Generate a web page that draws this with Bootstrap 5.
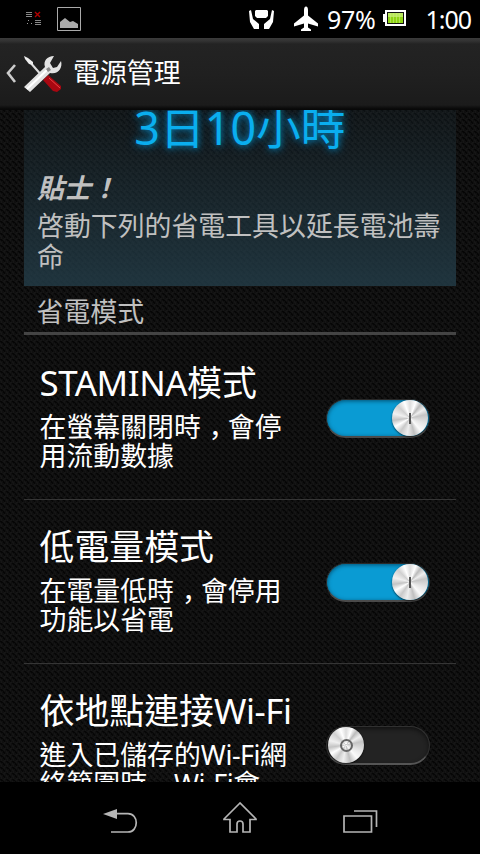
<!DOCTYPE html>
<html lang="zh-Hant">
<head>
<meta charset="utf-8">
<meta name="viewport" content="width=device-width, initial-scale=1">
<title>電源管理</title>
<link href="https://cdn.jsdelivr.net/npm/bootstrap@5.3.0/dist/css/bootstrap.min.css" rel="stylesheet">
<style>
body{width:480px;height:854px;background:#000;color:#fff;font-family:"Noto Sans","Noto Sans CJK TC",sans-serif;font-size:26.9px}
.status-bar{height:38px;flex:none}
.status-text{font-size:25px;line-height:39px;letter-spacing:-.3px}
.clock{letter-spacing:-1px;margin-right:9px}
.app-bar{height:72px;flex:none;background:linear-gradient(#3b3b3b 0,#323232 3px,#232323 6px,#202020 50%,#1b1b1b 67px,#080808 71px)}
.app-title{line-height:69px;margin-left:10px}
.screen{height:672px;flex:none;padding:0 24px;background-color:#0f0f0f;
background-image:url("data:image/svg+xml,%3Csvg xmlns='http://www.w3.org/2000/svg' width='6' height='6' shape-rendering='crispEdges'%3E%3Cpath fill='%23151515' d='M0 0h2v1H0zM1 1h1v2H1zM4 2h2v1H4zM3 3h2v1H3zM4 4h1v1H4zM0 5h1v1H0z'/%3E%3Cpath fill='%23060606' d='M3 0h2v1H3zM4 1h1v1H4zM0 3h2v1H0zM1 4h2v1H1zM3 5h1v1H3z'/%3E%3C/svg%3E")}
.estimate{height:176px;padding-left:13px;background:linear-gradient(rgba(30,48,56,.25),rgba(36,62,74,.8));color:#c0c0c0}
.time-left{height:62px;margin-left:-13px;font-size:44.800px;line-height:36px;color:#0aaeef;text-shadow:0 0 6px #087bb0,0 0 11px #075b82}
.tip-title{font-weight:700;font-style:italic;line-height:31px}
.tip-body{line-height:31px;margin-top:7px}
.section-head{height:49px;line-height:51px;padding-left:12.500px;border-bottom:3px solid #444;color:#c0c0c0}
.setting{height:164px;padding:27px 26px 0 15.500px;border-bottom:1px solid #353535}
.setting:first-child{height:165px;padding-top:28px}
.setting-name{font-size:34.900px;line-height:39px;height:40px}
.setting-note{line-height:29px;margin-top:9px}
.latin{letter-spacing:-.45px}
.comma{display:inline-block;width:27px;height:29px;vertical-align:top;text-indent:8px;font-family:"Noto Sans CJK JP",sans-serif;line-height:27px}
.toggle{width:104px;height:39px;margin-top:36px;border-radius:20px;padding:2px;background:#232323;border:1px solid #303030;border-bottom:2px solid #555;box-shadow:inset 0 2px 4px #111}
.toggle.active{padding-right:1px;background:#0a9bd3;border-color:#292929;border-bottom-color:#4a4a4a;box-shadow:inset 0 1px 4px #034f70}
.toggle:not(.active){margin-top:35px;padding-left:1px}
.knob{width:36px;height:36px;margin-top:-2px;border-radius:50%;background:conic-gradient(#ddd 0,#fff 20deg,#bbb 38deg,#eee 58deg,#c5c5c5 78deg,#e4e4e4 110deg,#fafafa 140deg,#c0c0c0 165deg,#eee 190deg,#c9c9c9 215deg,#fff 240deg,#c4c4c4 262deg,#f0f0f0 285deg,#d0d0d0 315deg,#fff 340deg,#ddd 360deg);box-shadow:0 1px 2px #000a}
.knob-line{width:2px;height:11px;background:#555}
.knob-ring{width:13px;height:13px;border:2px solid #666;border-radius:50%}
.nav-keys{height:72px;flex:none}
</style>
</head>
<body class="d-flex flex-column overflow-hidden">
<header class="status-bar d-flex align-items-center">
<svg width="249" height="38" viewBox="0 0 249 38" fill="none" class="flex-shrink-0">
<path d="M26 12.500h6M26 14.500h6M26 16.500h6M35 20.500h6M35 22.500h6M35 24.500h6" stroke="#888"/><path d="m35 12 5 5m0-5-5 5" stroke="#b00000" stroke-width="1.4"/><path d="M28 20h1v1h-1zM27 23h1v1h-1zM31 23h1v1h-1z" fill="#999"/>
<path d="M57.500 7.500h23v23h-23z" stroke="#aaa"/><path d="M60 28v-6l5-4 5 4 3-1 5 3v4z" fill="#aaa"/></svg>
<svg width="78" height="38" viewBox="249 0 78 38" class="flex-shrink-0" fill="#fff">
<path d="M256 10h11l1 1v5l-2 2h-9l-2-2v-5zM249 11l2-1 2 9 6 5v5h-5l-4-7zM274 11l-2-1-2 9-6 5v5h5l4-7z"/>
<path d="M306 6.500q2 0 2 4v5l10 8v3l-10-3v4l3 2v1.500h-10v-1.500l3-2v-4l-10 3v-3l10-8v-5q0-4 2-4z"/></svg>
<span class="status-text">97%</span>
<svg width="23" height="17" viewBox="0 0 23 17" class="ms-2 mb-1 flex-shrink-0"><path d="M0 5h2V1h21v16H2v-4H0z" fill="#fff"/><path d="M4 3h17v12H4z" fill="#111"/><path d="M5 4h15v10H5z" fill="#8ed414"/><path d="M5 4h15v4H5z" fill="#b9e85e"/><path d="M7.500 4v10m3-10v10m3-10v10m3-10v10" stroke="#caed79" stroke-opacity=".6"/></svg>
<span class="status-text clock ms-auto">1:00</span>
</header>
<div class="app-bar d-flex">
<svg width="63" height="70" viewBox="0 0 63 70" class="flex-shrink-0" fill="none">
<path d="m15 27-7 8 7 9" stroke="#ccc" stroke-width="2.600"/>
<path d="m29 23 14 16" stroke="#ddd" stroke-width="2"/><path d="m24 18 4 2 5 4v3l-4-1-4-5z" fill="#eee"/>
<path d="m43 42 5-5 13 11v3l-4 3-4-1z" fill="#a80711"/><path d="m49 40 11 10" stroke="#e44" stroke-width="1"/>
<path d="m24 49 21-20c-2-6 2-11 9-11l-4 7 3 5 4-1 4-6c2 7-3 14-11 12L30 54z" fill="#e2e2e2"/><path d="m27 51 21-20" stroke="#fff" stroke-width="2"/><path d="m46 31 3-2 2 3-3 2z" fill="#888"/></svg>
<span class="app-title">電源管理</span>
</div>
<main class="screen overflow-hidden">
<section class="estimate">
<div class="time-left text-center">3日10小時</div>
<div class="tip-title">貼士！</div>
<div class="tip-body text-nowrap">啓動下列的省電工具以延長電池壽<br>命</div>
</section>
<div class="section-head">省電模式</div>
<div>
<div class="setting d-flex justify-content-between"><div class="text-nowrap"><div class="setting-name"><span class="latin">STAMINA</span>模式</div><div class="setting-note">在螢幕關閉時<span class="comma">，</span>會停<br>用流動數據</div></div>
<div class="toggle active d-flex justify-content-end"><div class="knob d-flex align-items-center justify-content-center"><div class="knob-line"></div></div></div></div>
<div class="setting d-flex justify-content-between"><div class="text-nowrap"><div class="setting-name">低電量模式</div><div class="setting-note">在電量低時<span class="comma">，</span>會停用<br>功能以省電</div></div>
<div class="toggle active d-flex justify-content-end"><div class="knob d-flex align-items-center justify-content-center"><div class="knob-line"></div></div></div></div>
<div class="setting d-flex justify-content-between"><div class="text-nowrap"><div class="setting-name">依地點連接<span class="latin">Wi-Fi</span></div><div class="setting-note">進入已儲存的<span class="latin">Wi-Fi</span>網<br>絡範圍時<span class="comma">，</span><span class="latin">Wi-Fi</span>會</div></div>
<div class="toggle d-flex"><div class="knob d-flex align-items-center justify-content-center"><div class="knob-ring"></div></div></div></div>
</div>
</main>
<nav class="nav-keys"><svg width="480" height="72" viewBox="0 782 480 72" fill="none" stroke="#b5b5b5" stroke-width="1.700" class="d-block">
<path d="M116 813.700h12c11 0 11 18.300 0 18.300h-17"/><path d="m103 814 14-5v10z" fill="#b5b5b5" stroke="none"/>
<path d="m240 803-16 16v.500h6v12.500h7v-8q0-3 3-3t3 3v8h7v-12.500h6v-.500z"/><path d="M344 816h27.500v16H344zM354 811h22.500v16"/></svg></nav>
<script src="https://cdn.jsdelivr.net/npm/bootstrap@5.3.0/dist/js/bootstrap.bundle.min.js"></script>
</body>
</html>
